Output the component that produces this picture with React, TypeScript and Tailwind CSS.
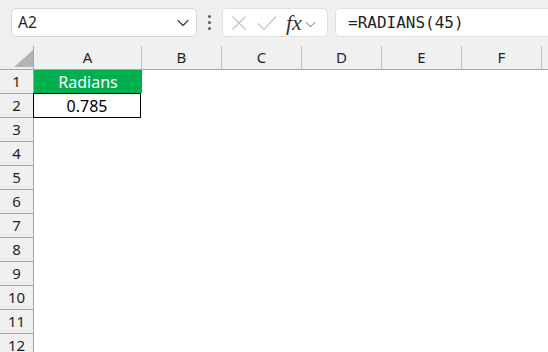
import React from 'react';

const cols = [
  { name: 'A', w: 'w-[108px]' },
  { name: 'B', w: 'w-[80px]' },
  { name: 'C', w: 'w-[80px]' },
  { name: 'D', w: 'w-[80px]' },
  { name: 'E', w: 'w-[80px]' },
  { name: 'F', w: 'w-[80px]' },
  { name: '', w: 'w-[80px]' },
];

const rows = [1, 2, 3, 4, 5, 6, 7, 8, 9, 10, 11, 12];

const uiFont = { fontFamily: '"Noto Sans", "Open Sans", sans-serif' };

function Chevron({ className }: { className?: string }) {
  return (
    <svg className={className} viewBox="0 0 12 8" fill="none" stroke="currentColor" strokeWidth={1.3}>
      <path d="M1 1.5l5 5 5-5" strokeLinecap="round" strokeLinejoin="round" />
    </svg>
  );
}

function FormulaBar() {
  return (
    <div className="flex h-[46px] items-start bg-[#f0f0f0] pt-[8px]">
      {/* name box */}
      <div className="ml-[11px] flex h-[29px] w-[186px] items-center justify-between rounded-[5px] border border-[#d6d6d6] bg-white pl-[6px] pr-[7px]">
        <span className="text-[15.5px] text-[#1f1f1f]" style={uiFont}>A2</span>
        <Chevron className="h-[8px] w-[12px] text-[#444]" />
      </div>

      {/* vertical dots */}
      <div className="ml-[11px] mr-[11px] flex h-[29px] flex-col items-center justify-center gap-[3px]">
        <span className="h-[3px] w-[3px] rounded-full bg-[#5a5a5a]" />
        <span className="h-[3px] w-[3px] rounded-full bg-[#5a5a5a]" />
        <span className="h-[3px] w-[3px] rounded-full bg-[#5a5a5a]" />
      </div>

      {/* cancel / enter / fx */}
      <div className="flex h-[29px] w-[106px] items-center rounded-[5px] border border-[#e0e0e0] bg-white pl-[8px]">
        <svg className="h-[16px] w-[16px] text-[#c3c3c3]" viewBox="0 0 16 16" fill="none" stroke="currentColor" strokeWidth={1.2}>
          <path d="M1.5 1.5l13 13M14.5 1.5l-13 13" />
        </svg>
        <svg className="ml-[10px] h-[16px] w-[20px] text-[#c3c3c3]" viewBox="0 0 20 16" fill="none" stroke="currentColor" strokeWidth={1.2}>
          <path d="M1 8.5l6 6L19 1.5" />
        </svg>
        <span
          className="ml-[9px] text-[22px] italic leading-none text-[#333]"
          style={{ fontFamily: '"Liberation Serif", "DejaVu Serif", serif' }}
        >
          fx
        </span>
        <Chevron className="ml-[3px] mt-[3px] h-[7px] w-[11px] text-[#9a9a9a]" />
      </div>

      {/* formula input */}
      <div className="ml-[7px] flex h-[29px] flex-1 items-center rounded-l-[5px] border border-r-0 border-[#e0e0e0] bg-white pl-[12px]">
        <span
          className="text-[16px] text-[#1f1f1f]"
          style={{ fontFamily: '"DejaVu Sans Mono", "Liberation Mono", monospace' }}
        >
          =RADIANS(45)
        </span>
      </div>
    </div>
  );
}

function HeaderRow() {
  return (
    <div className="flex h-[24px] border-b border-[#a6a6a6] bg-[#f0f0f0]">
      <div className="relative w-[34px] shrink-0 border-r border-[#a6a6a6]">
        <svg className="absolute left-[14px] top-[4px] h-[17px] w-[19px]" viewBox="0 0 19 17">
          <path d="M19 0V17H0Z" fill="#b4b4b4" />
        </svg>
      </div>
      {cols.map((c, i) => (
        <div
          key={i}
          className={`${c.w} flex shrink-0 items-center justify-center border-r border-[#c4c4c4] text-[15px] text-[#1f1f1f]`}
          style={uiFont}
        >
          {c.name}
        </div>
      ))}
    </div>
  );
}

export default function App() {
  return (
    <div className="h-[352px] w-[548px] overflow-hidden bg-white">
      <FormulaBar />
      <HeaderRow />
      {rows.map((r) => (
        <div key={r} className="flex h-[24px]">
          <div
            className="flex w-[34px] shrink-0 items-center justify-center border-b border-r border-[#a6a6a6] bg-[#f0f0f0] text-[15px] text-[#1f1f1f]"
            style={uiFont}
          >
            {r}
          </div>
          {r === 1 && (
            <div
              className="flex h-[23px] w-[108px] shrink-0 items-center justify-center bg-[#00b050] text-[16px] text-white"
              style={uiFont}
            >
              Radians
            </div>
          )}
          {r === 2 && (
            <div
              className="-ml-px -mt-px flex h-[25px] w-[108px] shrink-0 items-center justify-center border border-black text-[16px] text-black"
              style={uiFont}
            >
              0.785
            </div>
          )}
        </div>
      ))}
    </div>
  );
}
